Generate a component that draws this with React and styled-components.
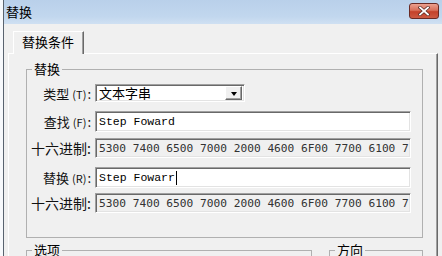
import React from 'react'
import styled, { createGlobalStyle } from 'styled-components'

const GlobalStyle = createGlobalStyle`
  html, body {
    margin: 0;
    padding: 0;
    background: #f7f9fc;
  }
  body {
    font-family: 'Noto Sans CJK SC', 'Liberation Sans', sans-serif;
    font-size: 13px;
    color: #000;
  }
`

// Window frame
const Window = styled.div`
  margin-left: 3px;
  width: 439px;
  height: 256px;
  overflow: hidden;
  box-sizing: border-box;
  border-left: 1px solid #59636f;
  background: #f0f0f0;
`

const TitleBar = styled.div`
  height: 24px;
  display: flex;
  align-items: center;
  padding: 0 3px 0 2px;
  background: linear-gradient(#b9d0ea, #c2d7ee 70%, #cfe0f2);
`

const Title = styled.span`
  font-size: 13px;
  line-height: 14px;
`

const CloseButton = styled.div`
  margin-left: auto;
  width: 30px;
  height: 16px;
  margin-top: -2px;
  box-sizing: border-box;
  border: 1px solid #6a2a24;
  border-radius: 3px;
  background: linear-gradient(#eca08f, #d8705a 45%, #c4412a 55%, #cd5a43);
  display: flex;
  align-items: center;
  justify-content: center;
`

const CloseIcon = () => (
  <svg width='12' height='10' viewBox='0 0 12 10'>
    <path d='M2 1.5 L10 8.5 M10 1.5 L2 8.5' stroke='#5a2a24' strokeWidth='3.2' strokeLinecap='square' />
    <path d='M2 1.5 L10 8.5 M10 1.5 L2 8.5' stroke='#fff' strokeWidth='1.8' strokeLinecap='square' />
  </svg>
)

// Tabs
const Client = styled.div`
  padding: 7px 4px 0 4px;
`

const TabStrip = styled.div`
  display: flex;
  padding-left: 5px;
`

const Tab = styled.div`
  position: relative;
  z-index: 1;
  width: 71px;
  height: 23px;
  margin-bottom: -1px;
  box-sizing: border-box;
  padding-left: 8px;
  border-top: 1px solid #fff;
  border-left: 1px solid #fff;
  border-right: 1px solid #696969;
  box-shadow: inset -1px 0 0 #a0a0a0;
  background: #f0f0f0;
  font-size: 13px;
  line-height: 20px;
`

const Panel = styled.div`
  height: 210px;
  box-sizing: border-box;
  padding: 8px 14px 0 17px;
  border-top: 1px solid #fff;
  border-left: 1px solid #fff;
  border-right: 1px solid #696969;
  box-shadow: inset -1px 0 0 #a0a0a0;
`

// Group boxes
const Group = styled.fieldset`
  margin: ${p => p.$mt || 0}px 0 0 0;
  padding: 8px 0 ${p => p.$pb || 0}px 0;
  border: 1px solid #b0b0b0;
  min-width: 0;
  flex: ${p => p.$flex || 'none'};
`

const Legend = styled.legend`
  margin-left: 5px;
  padding: 0 2px;
  font-size: 13px;
  line-height: 14px;
`

const GroupRow = styled.div`
  display: flex;
  gap: 17px;
`

const Row = styled.div`
  display: flex;
  align-items: center;
  margin-top: ${p => p.$mt || 0}px;
  height: ${p => p.$h}px;
`

const Label = styled.div`
  width: 64px;
  margin-right: 4px;
  text-align: right;
  white-space: nowrap;
  font-size: ${p => (p.$big ? '14px' : '13px')};
  color: #111;
`

const Key = styled.span`
  font-size: 11px;
  margin-left: 3px;
  margin-right: 1px;
`

const sunken = `
  box-sizing: border-box;
  border-style: solid;
  border-width: 1px;
  border-color: #a0a0a0 #fff #fff #a0a0a0;
  box-shadow: inset 1px 1px 0 #696969, inset -1px -1px 0 #e3e3e3;
`

const Combo = styled.div`
  ${sunken}
  width: 150px;
  height: 100%;
  background: #fff;
  display: flex;
  align-items: center;
  padding: 0 2px 0 3px;
  font-size: 13px;
`

const ComboText = styled.span`
  flex: 1;
  line-height: 14px;
`

const DropButton = styled.div`
  width: 17px;
  height: 14px;
  box-sizing: border-box;
  border-style: solid;
  border-width: 1px;
  border-color: #fff #696969 #696969 #fff;
  box-shadow: inset -1px -1px 0 #a0a0a0;
  background: #f0f0f0;
  display: flex;
  align-items: center;
  justify-content: center;
`

const Arrow = styled.div`
  width: 0;
  height: 0;
  border-left: 3.5px solid transparent;
  border-right: 3.5px solid transparent;
  border-top: 4px solid #000;
  margin-top: 1px;
`

const Field = styled.div`
  ${sunken}
  width: 316px;
  height: 100%;
  background: ${p => (p.$readOnly ? '#f0f0f0' : '#fff')};
  display: flex;
  align-items: center;
  padding-left: 3px;
  overflow: hidden;
  white-space: nowrap;
  font-family: ${p =>
    p.$readOnly
      ? "'DejaVu Sans Mono', 'Liberation Mono', monospace"
      : "'Liberation Mono', 'Courier New', monospace"};
  font-size: ${p => (p.$readOnly ? '11.2px' : '11.5px')};
  color: ${p => (p.$readOnly ? '#333' : '#000')};
`

const Caret = styled.span`
  display: inline-block;
  width: 1px;
  height: 14px;
  background: #000;
  margin-left: 1px;
`

// the hex box only has room for 46 characters
const toHex = s =>
  s
    .split('')
    .map(c => c.charCodeAt(0).toString(16).toUpperCase().padStart(2, '0') + '00')
    .join(' ')
    .slice(0, 46)

export default function App () {
  const find = 'Step Foward'
  const replace = 'Step Fowarr'
  return (
    <>
      <GlobalStyle />
      <Window>
        <TitleBar>
          <Title>替换</Title>
          <CloseButton>
            <CloseIcon />
          </CloseButton>
        </TitleBar>
        <Client>
          <TabStrip>
            <Tab>替换条件</Tab>
          </TabStrip>
          <Panel>
            <Group $pb={24}>
              <Legend>替换</Legend>
              <Row $h={18}>
                <Label>类型<Key>(T)</Key>:</Label>
                <Combo>
                  <ComboText>文本字串</ComboText>
                  <DropButton>
                    <Arrow />
                  </DropButton>
                </Combo>
              </Row>
              <Row $mt={9} $h={21}>
                <Label>查找<Key>(F)</Key>:</Label>
                <Field>{find}</Field>
              </Row>
              <Row $mt={6} $h={20}>
                <Label $big>十六进制:</Label>
                <Field $readOnly>{toHex(find)}</Field>
              </Row>
              <Row $mt={9} $h={21}>
                <Label>替换<Key>(R)</Key>:</Label>
                <Field>
                  {replace}
                  <Caret />
                </Field>
              </Row>
              <Row $mt={5} $h={20}>
                <Label $big>十六进制:</Label>
                <Field $readOnly>{toHex(replace)}</Field>
              </Row>
            </Group>
            <GroupRow>
              <Group $mt={5} $pb={40} $flex='1'>
                <Legend>选项</Legend>
              </Group>
              <Group $mt={5} $pb={40} $flex='0 0 92px'>
                <Legend>方向</Legend>
              </Group>
            </GroupRow>
          </Panel>
        </Client>
      </Window>
    </>
  )
}
